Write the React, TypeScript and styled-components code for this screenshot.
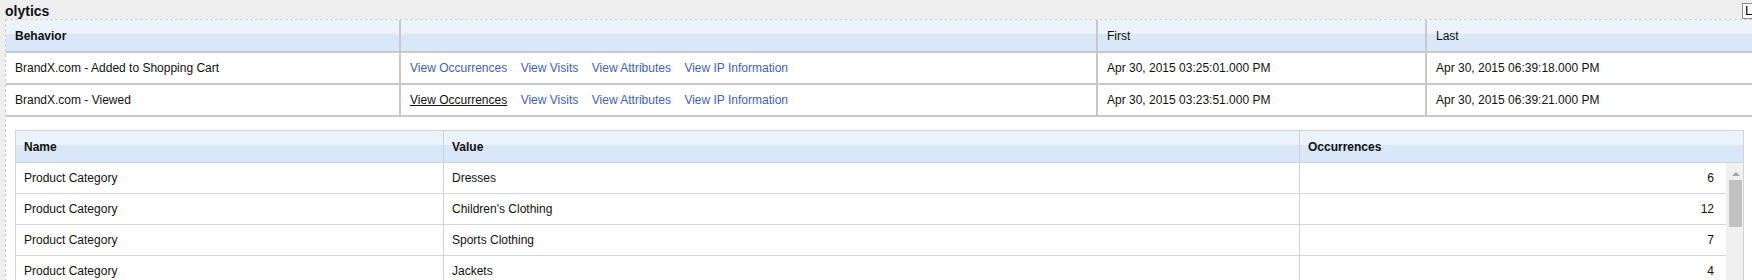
import styled, { createGlobalStyle, css } from "styled-components";

/*--------------------------
    Global
--------------------------*/
const GlobalReset = createGlobalStyle`
    html, body {
        margin: 0;
        padding: 0;
        overflow: hidden;
        background-color: #eeeeee;
    }

    * {
        box-sizing: border-box;
    }

    body {
        font-family: "Liberation Sans", Arial, sans-serif;
        font-size: 12px;
        color: #1a1a1a;
    }
`;

const Colors = {
    Border: "#c8c8c8",
    InnerBorder: "#d2d2d2",
    HeadTop: "#ebf3fd",
    HeadBottom: "#d9e7f8",
    Link: "#3b63b3",
};

const headBackground = css`
    background: linear-gradient(${Colors.HeadTop} 0 14px, ${Colors.HeadBottom} 14px 100%);
`;

/*--------------------------
    Styled
--------------------------*/
const Page = styled.div`
    width: 1752px;
`;

const TitleBar = styled.div`
    display: flex;
    height: 19px;
    align-items: flex-start;
    justify-content: space-between;
`;

const Title = styled.div`
    padding: 3px 0 0 5px;
    line-height: 16px;
    font-size: 14px;
    font-weight: bold;
    color: #111;
`;

const TitleButton = styled.button`
    height: 16px;
    width: 40px;
    margin: 3px -30px 0 0;
    padding: 0 0 0 2px;
    border: 1px solid #8c8c8c;
    background-color: #fff;
    color: #000;
    font-family: "Liberation Sans", Arial, sans-serif;
    font-size: 13px;
    line-height: 14px;
    text-align: left;
`;

const Panel = styled.div`
    margin: 0 0 0 5px;
    border-top: 1px dashed #d2d2d2;
    border-left: 1px dashed #cfcfcf;
    background-color: #fff;
`;

const OuterRow = styled.div<{ $head?: boolean }>`
    display: grid;
    grid-template-columns: 395px 697px 329px 1fr;
    height: ${(p) => (p.$head ? 33 : 32)}px;
    border-bottom: 2px solid ${Colors.Border};
    ${(p) => p.$head && headBackground}
`;

const OuterCell = styled.div<{ $bold?: boolean }>`
    display: flex;
    padding: 0 8px 0 9px;
    border-right: 2px solid ${Colors.Border};
    align-items: center;
    gap: 13.5px;
    font-weight: ${(p) => (p.$bold ? "bold" : "normal")};
    color: #111;
    white-space: nowrap;

    &:last-child {
        border-right: none;
    }
`;

const Link = styled.a<{ $active?: boolean }>`
    color: ${(p) => (p.$active ? "#111" : Colors.Link)};
    text-decoration: ${(p) => (p.$active ? "underline" : "none")};
    cursor: pointer;
`;

const Detail = styled.div`
    padding: 13px 8px 0 9px;
`;

const InnerGrid = styled.div`
    border: 1px solid ${Colors.InnerBorder};
    border-bottom: none;
`;

const InnerHead = styled.div`
    display: grid;
    grid-template-columns: 428px 856px 1fr;
    height: 32px;
    border-bottom: 1px solid ${Colors.InnerBorder};
    ${headBackground}
`;

const InnerBody = styled.div`
    display: flex;
`;

const InnerRows = styled.div`
    flex: 1;
`;

const InnerRow = styled.div`
    display: grid;
    grid-template-columns: 428px 856px 1fr;
    height: 31px;
    border-bottom: 1px solid #d6d6d6;
`;

const InnerCell = styled.div<{ $bold?: boolean; $right?: boolean }>`
    display: flex;
    padding: 0 12px 0 8px;
    border-right: 1px solid ${Colors.InnerBorder};
    align-items: center;
    justify-content: ${(p) => (p.$right ? "flex-end" : "flex-start")};
    font-weight: ${(p) => (p.$bold ? "bold" : "normal")};
    color: #111;
    white-space: nowrap;

    &:last-child {
        border-right: none;
    }
`;

const ScrollBar = styled.div`
    display: flex;
    width: 17px;
    padding: 9px 1px 0 3px;
    background-color: #f0f0f0;
    flex-direction: column;
    align-items: center;
`;

const ScrollArrow = styled.div`
    width: 0;
    height: 0;
    border-left: 4px solid transparent;
    border-right: 4px solid transparent;
    border-bottom: 4px solid #a3a3a3;
`;

const ScrollThumb = styled.div`
    width: 13px;
    height: 47px;
    margin: 4px 0 0 0;
    background-color: #c1c1c1;
`;

/*--------------------------
    Data
--------------------------*/
type Behavior = {
    name: string;
    first: string;
    last: string;
    active?: boolean;
};

const behaviors: Behavior[] = [
    {
        name: "BrandX.com - Added to Shopping Cart",
        first: "Apr 30, 2015 03:25:01.000 PM",
        last: "Apr 30, 2015 06:39:18.000 PM",
    },
    {
        name: "BrandX.com - Viewed",
        first: "Apr 30, 2015 03:23:51.000 PM",
        last: "Apr 30, 2015 06:39:21.000 PM",
        active: true,
    },
];

const links = ["View Occurrences", "View Visits", "View Attributes", "View IP Information"];

const attributes = [
    { name: "Product Category", value: "Dresses", count: 6 },
    { name: "Product Category", value: "Children's Clothing", count: 12 },
    { name: "Product Category", value: "Sports Clothing", count: 7 },
    { name: "Product Category", value: "Jackets", count: 4 },
];

/*--------------------------
    Main
--------------------------*/
const App = () => {
    return (
        <Page>
            <GlobalReset />
            <TitleBar>
                <Title>olytics</Title>
                <TitleButton>L</TitleButton>
            </TitleBar>
            <Panel>
                <OuterRow $head>
                    <OuterCell $bold>Behavior</OuterCell>
                    <OuterCell />
                    <OuterCell>First</OuterCell>
                    <OuterCell>Last</OuterCell>
                </OuterRow>
                {behaviors.map((b) => (
                    <OuterRow key={b.name}>
                        <OuterCell>{b.name}</OuterCell>
                        <OuterCell>
                            {links.map((l, i) => (
                                <Link key={l} $active={b.active && i === 0}>
                                    {l}
                                </Link>
                            ))}
                        </OuterCell>
                        <OuterCell>{b.first}</OuterCell>
                        <OuterCell>{b.last}</OuterCell>
                    </OuterRow>
                ))}
                <Detail>
                    <InnerGrid>
                        <InnerHead>
                            <InnerCell $bold>Name</InnerCell>
                            <InnerCell $bold>Value</InnerCell>
                            <InnerCell $bold>Occurrences</InnerCell>
                        </InnerHead>
                        <InnerBody>
                            <InnerRows>
                                {attributes.map((a) => (
                                    <InnerRow key={a.value}>
                                        <InnerCell>{a.name}</InnerCell>
                                        <InnerCell>{a.value}</InnerCell>
                                        <InnerCell $right>{a.count}</InnerCell>
                                    </InnerRow>
                                ))}
                            </InnerRows>
                            <ScrollBar>
                                <ScrollArrow />
                                <ScrollThumb />
                            </ScrollBar>
                        </InnerBody>
                    </InnerGrid>
                </Detail>
            </Panel>
        </Page>
    );
};

export default App;
